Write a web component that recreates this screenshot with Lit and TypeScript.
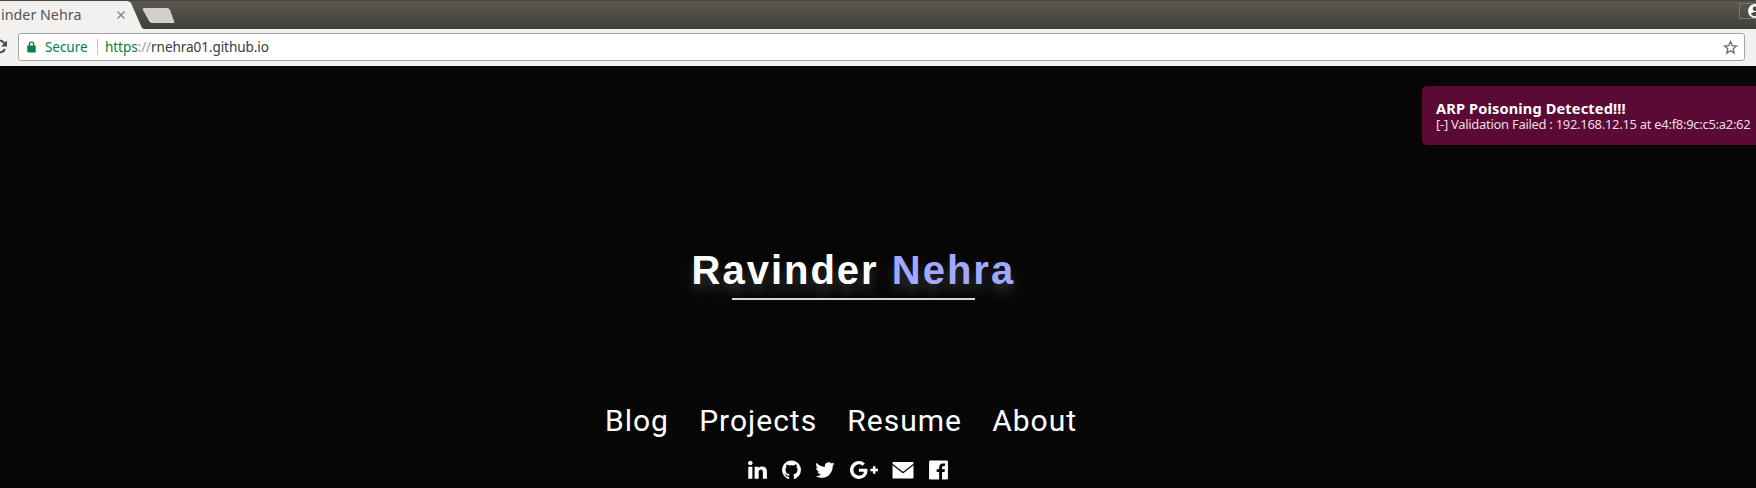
import { LitElement, html, css, svg } from "lit";
import { customElement } from "lit/decorators.js";

const icons = [
  { name: "linkedin", w: 19, box: "128 0 1536 1792", d: "M477 625v991h-330v-991h330zm21-306q1 73-50.5 122t-135.5 49h-2q-82 0-132-49t-50-122q0-74 51.5-122.5t134.5-48.5 133 48.5 51 122.5zm1166 729v568h-329v-530q0-105-40.5-164.5t-126.5-59.5q-63 0-105.5 34.5t-63.5 85.5q-11 30-11 81v553h-329q2-399 2-647t-1-296l-1-48h329v144h-2q20-32 41-56t56.5-52 87-43.5 114.5-15.5q171 0 275 113.5t104 332.5z" },
  { name: "github", w: 19, box: "128 0 1536 1792", d: "M896 128q209 0 385.5 103t279.5 279.5 103 385.5q0 251-146.5 451.5t-378.5 277.5q-27 5-40-7t-13-30q0-3 .5-76.5t.5-134.5q0-97-52-142 57-6 102.5-18t94-39 81-66.5 53-105 20.5-150.5q0-119-79-206 37-91-8-204-28-9-81 11t-92 44l-38 24q-93-26-192-26t-192 26q-16-11-42.5-27t-83.5-38.5-85-13.5q-45 113-8 204-79 87-79 206 0 85 20.5 150t52.5 105 80.5 67 94 39 102.5 18q-39 36-49 103-21 10-45 15t-57 5-65.5-21.5-55.5-62.5q-19-32-48.5-52t-49.5-24l-20-3q-21 0-29 4.5t-5 11.5 9 14 13 12l7 5q22 10 43.5 38t31.5 51l10 23q13 38 44 61.5t67 30 69.5 7 55.5-3.5l23-4q0 38 .5 88.5t.5 54.5q0 18-13 30t-40 7q-232-77-378.5-277.5t-146.5-451.5q0-209 103-385.5t279.5-279.5 385.5-103z" },
  { name: "twitter", w: 20, box: "88 0 1616 1792", d: "M1684 408q-67 98-162 167 1 14 1 42 0 130-38 259.5t-115.5 248.5-184.5 210.5-258 146-323 54.5q-271 0-496-145 35 4 78 4 225 0 401-138-105-2-188-64.5t-114-159.5q33 5 61 5 43 0 85-11-112-23-185.5-111.5t-73.5-205.5v-4q68 38 146 41-66-44-105-115t-39-154q0-88 44-163 121 149 294.5 238.5t371.5 99.5q-8-38-8-74 0-134 94.5-228.5t228.5-94.5q140 0 236 102 109-21 205-78-37 115-142 178 93-10 186-50z" },
  { name: "google-plus", w: 28, box: "0 0 2304 1792", d: "M1437 913q0 208-87 370.5t-248 254-369 91.5q-149 0-285-58t-234-156-156-234-58-285 58-285 156-234 234-156 285-58q286 0 491 192l-199 191q-117-113-292-113-123 0-227.5 62t-165.5 168.5-61 232.5 61 232.5 165.5 168.5 227.5 62q83 0 152.5-23t114.5-57.5 78.5-78.5 49-83 21.5-74h-416v-252h692q12 63 12 122zm867-122v210h-209v209h-210v-209h-209v-210h209v-209h210v209h209z" },
  { name: "email", w: 22, box: "0 0 22 22", d: "M1.200 3H20.800q.7 0 .7.700V4.800L11.800 12.300q-.8.600-1.600 0L.5 4.800V3.700q0-.700.700-.700zM.5 6.300L9.700 13.500q1.300 1 2.600 0L21.500 6.300V18.600q0 .900-.900.900H1.400q-.9 0-.9-.900z" },
  { name: "facebook", w: 19, box: "128 0 1536 1792", d: "M1579 128q35 0 60 25t25 60v1366q0 35-25 60t-60 25h-391v-595h199l30-232h-229v-148q0-56 23.5-84t91.5-28l122-1v-207q-63-9-178-9-136 0-217.5 80t-81.5 226v171h-200v232h200v595h-735q-35 0-60-25t-25-60v-1366q0-35 25-60t60-25h1366z" },
];

@customElement("browser-chrome")
class BrowserChrome extends LitElement {
  static styles = css`
    :host { display: block; font-family: "Noto Sans", "Open Sans", sans-serif; }
    .strip { display: flex; height: 29px; background: linear-gradient(#5b594f, #403f3a); border-top: 1px solid #45443e; box-sizing: border-box; overflow: hidden; }
    .tab { display: flex; box-sizing: border-box; width: 144px; height: 28px; background: #f2f1f0; clip-path: polygon(0 0, 128px 0, 131px 2px, 142px 27px, 144px 28px, 0 28px); }
    .title { width: 116px; font-size: 14.3px; line-height: 27px; color: #55565a; white-space: nowrap; letter-spacing: 0; padding-left: 1px; box-sizing: border-box; }
    .close { margin-top: 9px; }
    .new { margin: 7px 0 0 -2px; }
    .spacer { flex: 1; }
    .user { box-sizing: border-box; width: 17px; height: 16px; margin-top: 2px; border: 1px solid #77756d; border-right: 0; overflow: hidden; display: flex; }
    .user svg { flex: none; margin-left: 7px; }
    .bar { display: flex; align-items: center; height: 37px; background: #f2f1f0; box-sizing: border-box; padding-bottom: 1px; }
    .reload { width: 18px; flex: none; display: flex; }
    .omni { display: flex; align-items: center; box-sizing: border-box; width: 1727px; height: 28px; border: 1px solid #a6a4a2; border-radius: 3px; background: #fff; font-size: 13.6px; color: #3b3b3d; }
    .lock { margin-left: 8px; display: flex; }
    .secure { color: #0b8043; margin-left: 9px; width: 52px; white-space: nowrap; letter-spacing: -0.1px; }
    .omni .secure, .url { padding-bottom: 1px; }
    .sep { width: 1px; height: 16px; background: #c4c4c4; margin-right: 7px; }
    .url { letter-spacing: -0.1px; white-space: nowrap; }
    .scheme { color: #0b8043; }
    .slash { color: #999; }
    .star { margin: 0 6px 0 auto; display: flex; }
  `;
  render() {
    return html`
      <div class="strip">
        <div class="tab">
          <div class="title">inder Nehra</div>
          <svg class="close" width="10" height="10"><path d="M1.5 1.5l7 7M8.500 1.500l-7 7" stroke="#8c8b8a" stroke-width="1.500" /></svg>
        </div>
        <svg class="new" width="33" height="16"><path d="M2 0h23q2 0 3 2l4 11q1 2-1 2H10q-2 0-3-2L1 2Q0 0 2 0z" fill="#d2d1cf" /></svg>
        <div class="spacer"></div>
        <div class="user"><svg width="16" height="16"><circle cx="8" cy="7" r="7" fill="#fff" /><circle cx="8" cy="4.800" r="2.300" fill="#4c4b45" /><path d="M3.500 10q4.500-4 9 0q-4.500 4.500-9 0z" fill="#4c4b45" /></svg></div>
      </div>
      <div class="bar">
        <div class="reload"><svg width="9" height="16"><path d="M-4 3A5.500 5.500 0 0 1 4.500 4.500M5 10A5.500 5.500 0 0 1-3 12.500" fill="none" stroke="#4a4a4a" stroke-width="2" /><path d="M7 1.500V7.500H1z" fill="#4a4a4a" /></svg></div>
        <div class="omni">
          <span class="lock"><svg width="9" height="12"><path d="M2.300 5.500V3.300a2.200 2.200 0 0 1 4.400 0V5.500" fill="none" stroke="#0b8043" stroke-width="1.400" /><rect x="0.300" y="4.500" width="8.400" height="7" rx="0.800" fill="#0b8043" /></svg></span>
          <span class="secure">Secure</span><span class="sep"></span>
          <span class="url"><span class="scheme">https</span><span class="slash">://</span>rnehra01.github.io</span>
          <span class="star"><svg width="15" height="15" viewBox="0 0 15 15"><path d="M7.500 1.600l1.700 4 4.300.400-3.300 2.800 1 4.200-3.700-2.300L3.800 13l1-4.200L1.500 6l4.300-.400z" fill="none" stroke="#6b6b6b" stroke-width="1.300" /></svg></span>
        </div>
      </div>`;
  }
}

@customElement("app-root")
class AppRoot extends LitElement {
  static styles = css`
    :host { display: block; position: relative; width: 1756px; height: 488px; overflow: hidden; background: #060606; }
    .page { display: flex; flex-direction: column; color: #fff; }
    .name { margin: 178px 0 0 691.5px; font: bold 40px/52px "Liberation Sans", sans-serif; letter-spacing: 2px; white-space: nowrap; text-shadow: 0 8px 12px rgba(255, 255, 255, 0.18); }
    .last { color: #a0a8ff; }
    .rule { width: 243px; height: 2px; margin: 2px 0 0 732px; background: #d8d8d8; }
    .nav { display: flex; gap: 30.2px; margin: 101px 0 0 605px; font: 30px/40px Roboto, sans-serif; letter-spacing: 1px; white-space: nowrap; }
    .social { display: flex; gap: 14.5px; margin: 17.5px 0 0 748.2px; }
    .social svg { display: block; fill: #fff; height: 22px; }
    .notice { position: absolute; left: 1422px; top: 86px; width: 340px; height: 59px; box-sizing: border-box; padding: 14px 0 0 14px; border-radius: 5px 0 0 5px; background: #5a0a34; font-family: "Noto Sans", sans-serif; white-space: nowrap; color: #e9dde3; }
    .head { font-size: 14.6px; font-weight: bold; line-height: 17px; color: #fff; letter-spacing: 0.13px; }
    .body { font-size: 13px; line-height: 15px; letter-spacing: -0.29px; }
  `;
  render() {
    return html`
      <browser-chrome></browser-chrome>
      <div class="page">
        <div class="name">Ravinder <span class="last">Nehra</span></div>
        <div class="rule"></div>
        <div class="nav"><span>Blog</span><span>Projects</span><span>Resume</span><span>About</span></div>
        <div class="social">${icons.map((i) => html`<svg width=${i.w} height="22" viewBox=${i.box} aria-label=${i.name}>${svg`<path d=${i.d} />`}</svg>`)}</div>
      </div>
      <div class="notice">
        <div class="head">ARP Poisoning Detected!!!</div>
        <div class="body">[-] Validation Failed : 192.168.12.15 at e4:f8:9c:c5:a2:62</div>
      </div>`;
  }
}
